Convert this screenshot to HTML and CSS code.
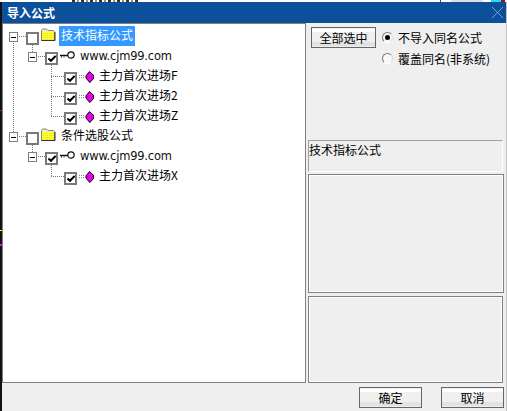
FILE: index.html
```html
<!DOCTYPE html>
<html lang="zh-CN">
<head>
<meta charset="utf-8">
<title>导入公式</title>
<link rel="stylesheet" href="styles.css">
</head>
<body>
<svg class="defs" width="0" height="0" aria-hidden="true">
  <defs>
    <pattern id="dither" width="2" height="2" patternUnits="userSpaceOnUse">
      <rect width="2" height="2" fill="#ffff10"/>
      <rect width="1" height="1" fill="#fff860"/>
      <rect x="1" y="1" width="1" height="1" fill="#e4e430"/>
    </pattern>
    <symbol id="folder" viewBox="0 0 16 14">
      <path d="M1.5 12.5V2.5L2.5 1H6.5L8 2.5H13.5L14.5 3.5V12.5Z" fill="#f0ecc0" stroke="#8a8460"/>
      <rect x="2" y="4" width="12" height="8" fill="url(#dither)"/>
      <path d="M1.5 12.5H15V4" fill="none" stroke="#333"/>
    </symbol>
    <symbol id="key" viewBox="0 0 15 9">
      <circle cx="11" cy="4" r="3.2" fill="#fff" stroke="#111" stroke-width="1.2"/>
      <path d="M0 4.5H8" stroke="#111" stroke-width="1.5"/>
      <path d="M1.5 5V7M4 5V6.5" stroke="#666"/>
    </symbol>
    <symbol id="formula" viewBox="0 0 15 12">
      <path d="M0 4.5H6M0 6.5H6" stroke="#888" stroke-dasharray="1 1"/>
      <path d="M10.5 .6L15 4.8V7L10.8 11.6L7 7V4.8Z" fill="#f000f0" stroke="#000"/>
      <path d="M7.5 5L11 7L14.5 5" fill="none" stroke="#a000a0" stroke-width=".6"/>
    </symbol>
    <symbol id="tick" viewBox="0 0 7 6">
      <path d="M.3 3L2.6 5L6.7 .7" fill="none" stroke="#000" stroke-width="1.8"/>
    </symbol>
  </defs>
</svg>
<div class="screen">
  <div class="backdrop-top">
    <span class="gap-a"></span><span class="frag"></span><span class="gap-b"></span>
    <span class="edge"></span><span class="gap-c"></span><span class="grey"></span><span class="gap-d"></span><span class="cyan"></span><span class="red"></span>
  </div>
  <div class="stage">
    <div class="backdrop-left"></div>
    <div class="window">
      <header class="titlebar">
        <span class="title">导入公式</span>
        <svg class="close" viewBox="0 0 11 11" aria-label="关闭"><path d="M0 0L11 11M11 0L0 11" stroke="#7f9fc8" stroke-width="1"/></svg>
      </header>
      <div class="body">
        <section class="tree">
          <svg class="lines" width="302" height="358" viewBox="3 24 302 358" aria-hidden="true">
            <path d="M13.5 41V132M17 36.5H26M36 56.5H45M32.5 45V52M51.5 65V116M51 76.5H64M51 96.5H64M51 116.5H64M17 136.5H26M32.5 145V152M36 156.5H45M51.5 165V176M51 176.5H64" fill="none" stroke="#777" stroke-dasharray="1 1"/>
          </svg>
          <div class="row lv0">
            <span class="exp"></span><span class="cb"></span>
            <svg class="ic-folder"><use href="#folder"/></svg>
            <span class="label sel">技术指标公式</span>
          </div>
          <div class="row lv1">
            <span class="exp"></span><span class="cb"><svg class="tick"><use href="#tick"/></svg></span>
            <svg class="ic-key"><use href="#key"/></svg>
            <span class="label url">www.cjm99.com</span>
          </div>
          <div class="row lv2">
            <span class="cb"><svg class="tick"><use href="#tick"/></svg></span>
            <svg class="ic-formula"><use href="#formula"/></svg>
            <span class="label">主力首次进场F</span>
          </div>
          <div class="row lv2">
            <span class="cb"><svg class="tick"><use href="#tick"/></svg></span>
            <svg class="ic-formula"><use href="#formula"/></svg>
            <span class="label">主力首次进场2</span>
          </div>
          <div class="row lv2">
            <span class="cb"><svg class="tick"><use href="#tick"/></svg></span>
            <svg class="ic-formula"><use href="#formula"/></svg>
            <span class="label">主力首次进场Z</span>
          </div>
          <div class="row lv0">
            <span class="exp"></span><span class="cb"></span>
            <svg class="ic-folder"><use href="#folder"/></svg>
            <span class="label">条件选股公式</span>
          </div>
          <div class="row lv1">
            <span class="exp"></span><span class="cb"><svg class="tick"><use href="#tick"/></svg></span>
            <svg class="ic-key"><use href="#key"/></svg>
            <span class="label url">www.cjm99.com</span>
          </div>
          <div class="row lv2">
            <span class="cb"><svg class="tick"><use href="#tick"/></svg></span>
            <svg class="ic-formula"><use href="#formula"/></svg>
            <span class="label">主力首次进场X</span>
          </div>
        </section>
        <aside class="side">
          <div class="controls">
            <button class="btn btn-all" type="button">全部选中</button>
            <div class="radios">
              <div class="radio-row"><span class="radio on"></span><span>不导入同名公式</span></div>
              <div class="radio-row"><span class="radio"></span><span>覆盖同名(非系统)</span></div>
            </div>
          </div>
          <div class="info">技术指标公式</div>
          <div class="box box-a"></div>
          <div class="box box-b"></div>
        </aside>
      </div>
      <footer class="footer">
        <button class="btn btn-foot" type="button">确定</button>
        <button class="btn btn-foot" type="button">取消</button>
      </footer>
    </div>
  </div>
</div>
</body>
</html>
```
FILE: styles.css
```css
* { box-sizing: border-box; }
html, body { margin: 0; padding: 0; }
body {
  width: 507px;
  height: 411px;
  overflow: hidden;
  background: #efefef;
  font: 12px/16px "Noto Sans CJK SC", "Liberation Sans", sans-serif;
  color: #000;
}
.defs { display: block; height: 0; }
.screen { display: flex; flex-direction: column; width: 507px; height: 411px; }

.backdrop-top { display: flex; height: 2px; background: #fff; flex: none; overflow: hidden; }
.backdrop-top span { display: block; height: 2px; flex: none; }
.gap-a { width: 72px; }
.frag { width: 66px; background: repeating-linear-gradient(90deg, #333 0 3px, #fff 3px 5px, #a86 5px 7px, #fff 7px 9px); }
.gap-b { width: 302px; }
.edge { width: 1px; background: #444; }
.gap-c { width: 10px; }
.grey { width: 32px; background: #ddd; }
.gap-d { width: 8px; }
.cyan { width: 10px; background: #22e0f0; }
.red { width: 4px; background: #a01020; }

.stage { display: flex; flex: 1; min-height: 0; }
.backdrop-left {
  width: 2px;
  flex: none;
  background: linear-gradient(180deg,
    #111 0 108px, #c02020 108px 109px, #111 109px 228px,
    #ffff00 228px 229px, #111 229px 242px, #ff00ff 242px 244px, #111 244px);
}

.window { flex: 1; display: flex; flex-direction: column; background: #efefef; border-right: 1px solid #c4c4c4; }
.titlebar { height: 21px; flex: none; display: flex; align-items: center; justify-content: space-between; background: #0c4f9b; padding: 0 3px 0 5px; }
.title { color: #fff; font-weight: 700; font-size: 12px; line-height: 16px; margin-top: 1px; }
.close { width: 11px; height: 11px; }

.body { display: flex; height: 360px; flex: none; }
.tree { position: relative; width: 304px; height: 360px; flex: none; background: #fff; border: 1px solid #808080; padding-top: 2px; }
.lines { position: absolute; left: 0; top: 0; }

.row { position: relative; display: flex; align-items: flex-start; height: 20px; }
.lv0 { padding-left: 6px; }
.lv1 { padding-left: 25px; }
.lv2 { padding-left: 61px; }

.exp { width: 9px; height: 10px; margin-top: 6px; margin-right: 8px; border: 1px solid #808080; background: linear-gradient(#000, #000) center / 5px 1px no-repeat #fff; flex: none; }
.cb { width: 13px; height: 13px; margin-top: 6px; border: 2px solid #7a7a7a; background: #fff; display: flex; align-items: center; justify-content: center; flex: none; }
.lv0 .cb { margin-right: 1px; }
.lv1 .cb, .lv2 .cb { margin-right: 2px; }
.tick { width: 8px; height: 7px; display: block; flex: none; }

.ic-folder { width: 16px; height: 14px; margin-top: 2px; flex: none; }
.ic-key { width: 15px; height: 9px; margin-top: 5px; flex: none; }
.ic-formula { width: 15px; height: 12px; margin-top: 5px; flex: none; }

.label { line-height: 18px; white-space: nowrap; flex: none; }
.lv0 .label { margin-left: 3px; padding: 0 2px; height: 20px; }
.lv1 .label, .lv2 .label { margin-left: 5px; }
.label.sel { background: #3399ff; color: #fff; }
.url { font-family: "DejaVu Sans", sans-serif; font-size: 11.5px; color: #111; letter-spacing: -.2px; line-height: 20px; }

.side { display: flex; flex-direction: column; flex: 1; padding-left: 2px; }
.controls { height: 117px; flex: none; display: flex; align-items: flex-start; padding: 4px 0 0 3px; }
.btn {
  font: 12px/16px "Noto Sans CJK SC", "Liberation Sans", sans-serif;
  color: #000;
  padding: 0;
  border: 1px solid #666;
  background: linear-gradient(#efefef 0 1px, #fff 1px 4px, #f0f0f0 4px 14px, #e2e2e2 14px 18px, #efefef 18px);
}
.btn-all { width: 65px; height: 21px; }
.radios { display: flex; flex-direction: column; margin-left: 6px; }
.radio-row { display: flex; align-items: center; height: 21px; gap: 5px; white-space: nowrap; }
.radio { width: 11px; height: 11px; border-radius: 50%; border: 1px solid; border-color: #777 #ddd #fff #777; background: #f8f8f8; display: flex; align-items: center; justify-content: center; flex: none; }
.radio.on::after { content: ""; width: 5px; height: 5px; border-radius: 50%; background: #000; }

.info { width: 195px; height: 32px; flex: none; border: 1px solid; border-color: #a0a0a0 #fff #fff #a0a0a0; padding: 0; line-height: 17px; }
.box { flex: none; border: 1px solid #808080; box-shadow: inset 0 0 0 1px #fff; }
.box-a { width: 196px; height: 119px; margin-top: 2px; }
.box-b { width: 195px; height: 87px; margin-top: 3px; }

.footer { flex: 1; display: flex; justify-content: flex-end; align-items: flex-start; gap: 19px; padding: 4px 2px 0 0; }
.btn-foot { width: 63px; height: 21px; }
```
